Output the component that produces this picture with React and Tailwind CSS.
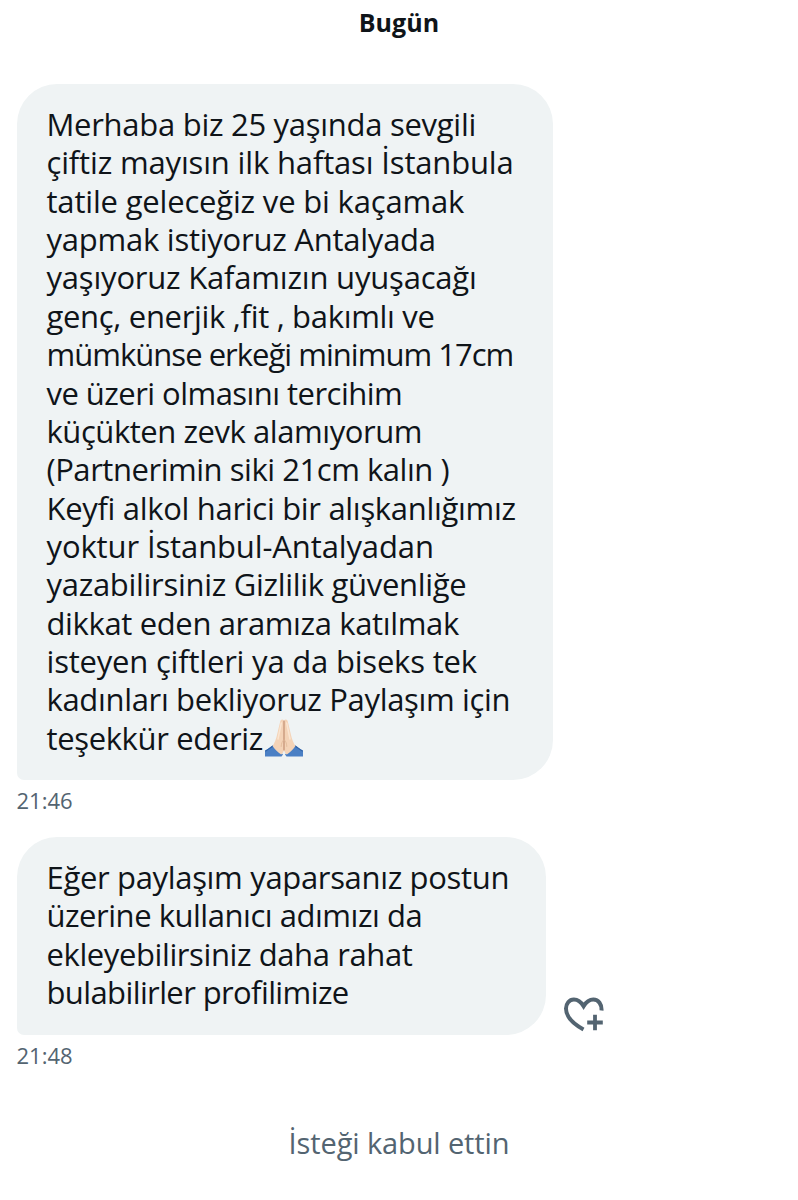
const FIRST_MESSAGE = [
  ["Merhaba biz 25 yaşında sevgili", "tracking-[-0.28px]"],
  ["çiftiz mayısın ilk haftası İstanbula", "tracking-[-0.16px]"],
  ["tatile geleceğiz ve bi kaçamak", "tracking-[-0.18px]"],
  ["yapmak istiyoruz Antalyada", "tracking-[-0.24px]"],
  ["yaşıyoruz Kafamızın uyuşacağı", "tracking-[-0.2px]"],
  ["genç, enerjik ,fit , bakımlı ve", "tracking-[-0.31px]"],
  ["mümkünse erkeği minimum 17cm", "tracking-[-0.98px]"],
  ["ve üzeri olmasını tercihim", "tracking-[-0.54px]"],
  ["küçükten zevk alamıyorum", "tracking-[-0.44px]"],
  ["(Partnerimin siki 21cm kalın )", "tracking-[-0.46px]"],
  ["Keyfi alkol harici bir alışkanlığımız", "tracking-[-0.31px]"],
  ["yoktur İstanbul-Antalyadan", "tracking-[-0.12px]"],
  ["yazabilirsiniz Gizlilik güvenliğe", "tracking-[-0.3px]"],
  ["dikkat eden aramıza katılmak", "tracking-[-0.36px]"],
  ["isteyen çiftleri ya da biseks tek", "tracking-[-0.2px]"],
  ["kadınları bekliyoruz Paylaşım için", "tracking-[-0.33px]"],
  ["teşekkür ederiz", "tracking-[-0.36px]"],
];

const SECOND_MESSAGE = [
  ["Eğer paylaşım yaparsanız postun", "tracking-[-0.33px]"],
  ["üzerine kullanıcı adımızı da", "tracking-[-0.47px]"],
  ["ekleyebilirsiniz daha rahat", "tracking-[-0.4px]"],
  ["bulabilirler profilimize", "tracking-[-0.61px]"],
];

function FoldedHands() {
  return (
    <svg viewBox="0 0 40 38" className="ml-[1.500px] h-[38px] w-[40px] shrink-0" role="img" aria-label="🙏🏻">
      <path d="M1 37.500V31.500c3-1.200 6-4.500 9-5.500l9 9.500-1.500 2z" fill="#4a7fc4" />
      <path d="M39 37.500V31.500c-3-1.200-6-4.500-9-5.500l-9 9.500 1.500 2z" fill="#4a7fc4" />
      <path d="M1.300 32.200c3.200-1.600 6-4.600 8.700-5.600M38.700 32.200c-3.200-1.600-6-4.600-8.700-5.600" fill="none" stroke="#2f62a8" strokeWidth="1.200" />
      <path d="M19.900 1.500c-1.500-1.800-3.300-.8-3.700 1.100L13 16c-.8 4-2.600 8.200-4.500 11 2.400 3.200 5.400 6.600 8.700 8.600 1.700-1.200 2.700-3 2.700-5.500z" fill="#f4d3b7" />
      <path d="M20.100 1.500c1.500-1.800 3.300-.8 3.700 1.100L27 16c.8 4 2.600 8.200 4.500 11-2.400 3.200-5.400 6.600-8.700 8.600-1.700-1.200-2.700-3-2.700-5.500z" fill="#f4d3b7" />
      <path d="M17.300 4 14 20M22.700 4 26 20" fill="none" stroke="#fae5d1" strokeWidth="1.500" strokeLinecap="round" />
      <path d="M20 2v29" fill="none" stroke="#bd8868" strokeWidth="1.100" strokeLinecap="round" />
      <path d="M19.500 21c-1.600 1.500-2.200 4-2.300 6.500M20.500 21c1.600 1.500 2.200 4 2.300 6.500" fill="none" stroke="#dfb797" strokeWidth=".8" strokeLinecap="round" />
    </svg>
  );
}

function HeartPlus() {
  return (
    <svg viewBox="0 0 44 40" className="h-10 w-11" fill="none" stroke="#536471" strokeWidth="4">
      <path d="M38.500 16.500C38.900 10.500 35.600 5.500 30.300 5.500c-4.200 0-7.200 2.500-9.700 6.600C18.100 8 15.100 5.500 10.900 5.500 6.200 5.500 3 9.700 3 14.500c0 9.100 8.600 16.100 17.500 20.900" />
      <path d="M32 20.700v15.600M24.200 28.500h15.600" strokeWidth="3.800" />
    </svg>
  );
}

function Bubble({ lines, className, children }) {
  return (
    <div className={`rounded-[40px] rounded-bl-[7px] bg-[#eff3f4] pl-[29.500px] text-[31px] leading-[38.360px] ${className}`}>
      {lines.map(([text, tracking], i) => (
        <p key={text} className="flex items-center whitespace-nowrap">
          <span className={tracking}>{text}</span>
          {i === lines.length - 1 && children}
        </p>
      ))}
    </div>
  );
}

export default function App() {
  return (
    <main className="flex h-[1200px] w-[798px] flex-col overflow-hidden bg-white font-['Open_Sans',sans-serif] text-[#0f1419]">
      <h1 className="h-[84px] pt-[5px] text-center text-[25px] leading-[34px] font-bold tracking-[0.1px]">Bugün</h1>
      <section className="pl-[17px]">
        <Bubble lines={FIRST_MESSAGE} className="h-[696px] w-[536px] pt-[21px]">
          <FoldedHands />
        </Bubble>
        <time className="-ml-[0.500px] block h-[57px] pt-[5px] text-[22px] leading-[30px] text-[#536471]">21:46</time>
        <div className="flex items-end gap-[17px]">
          <Bubble lines={SECOND_MESSAGE} className="h-[198px] w-[529px] pt-[21px]" />
          <button className="mb-[1.500px]" aria-label="❤"><HeartPlus /></button>
        </div>
        <time className="-ml-[0.500px] block h-[57px] pt-[5px] text-[22px] leading-[30px] text-[#536471]">21:48</time>
      </section>
      <p className="pt-[31px] text-center text-[29px] leading-[40px] tracking-[-0.12px] text-[#536471]">İsteği kabul ettin</p>
    </main>
  );
}
